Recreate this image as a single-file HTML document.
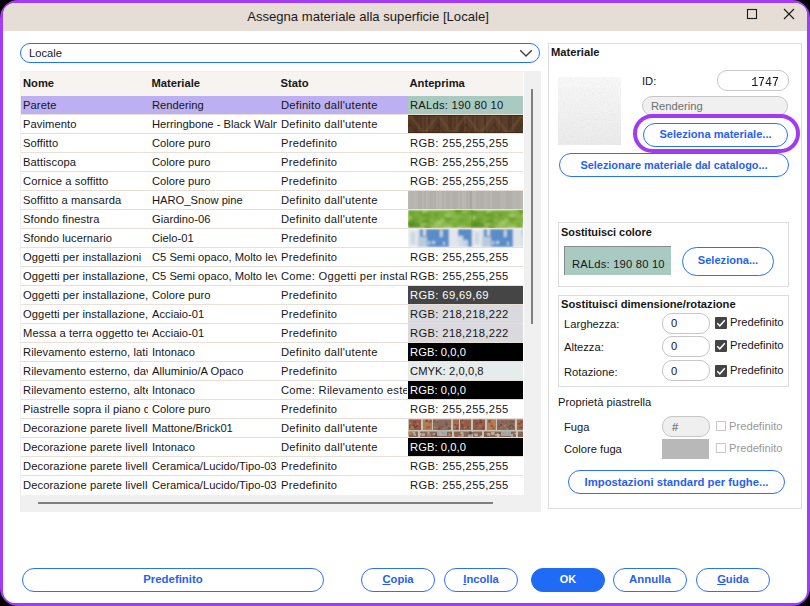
<!DOCTYPE html>
<html><head><meta charset="utf-8">
<style>
*{box-sizing:border-box;margin:0;padding:0}
html,body{width:810px;height:606px;background:#000;overflow:hidden;font-family:"Liberation Sans",sans-serif;color:#161616}
.win{position:absolute;left:0;top:0;width:810px;height:606px;background:#fff;clip-path:inset(3px round 12px)}
.frame{position:absolute;left:0;top:0;width:810px;height:606px;background:#A53CF5;border-radius:18px}
.tb{position:absolute;left:0;top:0;width:810px;height:31px;background:#E6DDD7}
.title{position:absolute;left:0;top:3px;width:736px;height:28px;line-height:28px;text-align:center;font-size:13.1px;color:#1a1a1a}
.t{position:absolute;white-space:nowrap;font-size:11.2px;line-height:13px}
.b{font-weight:bold}
.combo{position:absolute;left:20px;top:43px;width:520px;height:20px;border:1.3px solid #2070FA;border-radius:10px;background:#fff}
.table{position:absolute;left:20px;top:71px;width:521px;height:441px;background:#F0F0F0}
.hdr{position:absolute;left:0;top:1px;width:503px;height:24px;background:#F7F3F0}
.hdr span{position:absolute;top:0;line-height:23px;font-size:11.2px;font-weight:bold;white-space:nowrap}
.row{position:absolute;left:1px;width:502px;height:19px;background:#fff;border-bottom:1px solid #EADFD7;overflow:hidden}
.row .c{position:absolute;top:0;height:18px;line-height:18px;font-size:11.2px;white-space:nowrap;overflow:hidden}
.c1{left:2px;width:125px;letter-spacing:0.08px}
.c2{left:131px;width:125px}
.c3{left:260px;width:126px;letter-spacing:0.25px}
.pv{position:absolute;left:387px;top:0;width:115px;height:18px}
.pvt{position:absolute;left:2px;top:0;line-height:18px;font-size:11.2px;white-space:nowrap;letter-spacing:0.37px}
.sel{background:#BDB0F2}
.grp{position:absolute;border:1px solid #DCDCDC}
.btn{position:absolute;border:1px solid #2A70F8;border-radius:13px;color:#1F62F2;font-weight:bold;text-align:center;font-size:10.9px;background:#fff;white-space:nowrap}
.inp{position:absolute;border:1px solid #C6C6C6;border-radius:10px;background:#fff}
.chk{position:absolute;width:12px;height:12px;background:#444;border-radius:1px}
.chke{position:absolute;width:10px;height:10px;border:1px solid #C8C8C8;background:#fff}


.last{border-bottom:none;border-bottom-right-radius:2px}

</style></head><body>
<div class="frame"></div>
<div class="win">
  <div class="tb"></div>
  <div class="title">Assegna materiale alla superficie [Locale]</div>
  <svg class="abs" style="position:absolute;left:746px;top:8px" width="12" height="12"><rect x="1.5" y="1.5" width="9" height="9" fill="none" stroke="#1a1a1a" stroke-width="1.1"/></svg>
  <svg style="position:absolute;left:783px;top:8px" width="12" height="12"><path d="M1 1L11 11M11 1L1 11" stroke="#1a1a1a" stroke-width="1.1"/></svg>

  <div class="combo"></div>
  <span class="t" style="left:29px;top:47px">Locale</span>
  <svg style="position:absolute;left:519px;top:47px" width="16" height="12"><path d="M1.2 3.2L7 9L12.8 3.2" fill="none" stroke="#404040" stroke-width="1.4"/></svg>

  <div class="table">
    <div class="hdr"><span style="left:3px">Nome</span><span style="left:131.5px">Materiale</span><span style="left:260.5px">Stato</span><span style="left:389.5px">Anteprima</span></div>
<div class="row sel" style="top:25px"><span class="c c1">Parete</span><span class="c c2">Rendering</span><span class="c c3">Definito dall'utente</span><div class="pv" style="background:#A9CAC1"><span class="pvt" style="color:#161616;letter-spacing:0.24px">RALds: 190 80 10</span></div></div>
<div class="row" style="top:44px"><span class="c c1">Pavimento</span><span class="c c2">Herringbone - Black Walnut</span><span class="c c3">Definito dall'utente</span><div class="pv"><svg width="115" height="18" style="position:absolute;left:0;top:0;display:block"><defs><filter id="hb" x="0" y="0" width="1" height="1"><feGaussianBlur stdDeviation="0.6"/></filter></defs><g filter="url(#hb)"><rect width="115" height="18" fill="#553A26"/><rect x="0" y="0" width="2" height="18" fill="#52382A" opacity="0.6"/><rect x="2" y="0" width="2" height="18" fill="#52382A" opacity="0.6"/><rect x="4" y="0" width="2" height="18" fill="#52382A" opacity="0.6"/><rect x="6" y="0" width="2" height="18" fill="#4A301F" opacity="0.6"/><rect x="8" y="0" width="2" height="18" fill="#4A301F" opacity="0.6"/><rect x="10" y="0" width="2" height="18" fill="#52382A" opacity="0.6"/><rect x="12" y="0" width="2" height="18" fill="#4A301F" opacity="0.6"/><rect x="14" y="0" width="2" height="18" fill="#5E412B" opacity="0.6"/><rect x="16" y="0" width="2" height="18" fill="#52382A" opacity="0.6"/><rect x="18" y="0" width="2" height="18" fill="#654630" opacity="0.6"/><rect x="20" y="0" width="2" height="18" fill="#4A301F" opacity="0.6"/><rect x="22" y="0" width="2" height="18" fill="#5E412B" opacity="0.6"/><rect x="24" y="0" width="2" height="18" fill="#5E412B" opacity="0.6"/><rect x="26" y="0" width="2" height="18" fill="#52382A" opacity="0.6"/><rect x="28" y="0" width="2" height="18" fill="#52382A" opacity="0.6"/><rect x="30" y="0" width="2" height="18" fill="#4A301F" opacity="0.6"/><rect x="32" y="0" width="2" height="18" fill="#5E412B" opacity="0.6"/><rect x="34" y="0" width="2" height="18" fill="#5E412B" opacity="0.6"/><rect x="36" y="0" width="2" height="18" fill="#5E412B" opacity="0.6"/><rect x="38" y="0" width="2" height="18" fill="#5E412B" opacity="0.6"/><rect x="40" y="0" width="2" height="18" fill="#4A301F" opacity="0.6"/><rect x="42" y="0" width="2" height="18" fill="#4A301F" opacity="0.6"/><rect x="44" y="0" width="2" height="18" fill="#5E412B" opacity="0.6"/><rect x="46" y="0" width="2" height="18" fill="#52382A" opacity="0.6"/><rect x="48" y="0" width="2" height="18" fill="#654630" opacity="0.6"/><rect x="50" y="0" width="2" height="18" fill="#52382A" opacity="0.6"/><rect x="52" y="0" width="2" height="18" fill="#4A301F" opacity="0.6"/><rect x="54" y="0" width="2" height="18" fill="#4A301F" opacity="0.6"/><rect x="56" y="0" width="2" height="18" fill="#654630" opacity="0.6"/><rect x="58" y="0" width="2" height="18" fill="#52382A" opacity="0.6"/><rect x="60" y="0" width="2" height="18" fill="#5E412B" opacity="0.6"/><rect x="62" y="0" width="2" height="18" fill="#5E412B" opacity="0.6"/><rect x="64" y="0" width="2" height="18" fill="#52382A" opacity="0.6"/><rect x="66" y="0" width="2" height="18" fill="#654630" opacity="0.6"/><rect x="68" y="0" width="2" height="18" fill="#52382A" opacity="0.6"/><rect x="70" y="0" width="2" height="18" fill="#5E412B" opacity="0.6"/><rect x="72" y="0" width="2" height="18" fill="#654630" opacity="0.6"/><rect x="74" y="0" width="2" height="18" fill="#654630" opacity="0.6"/><rect x="76" y="0" width="2" height="18" fill="#4A301F" opacity="0.6"/><rect x="78" y="0" width="2" height="18" fill="#654630" opacity="0.6"/><rect x="80" y="0" width="2" height="18" fill="#5E412B" opacity="0.6"/><rect x="82" y="0" width="2" height="18" fill="#5E412B" opacity="0.6"/><rect x="84" y="0" width="2" height="18" fill="#5E412B" opacity="0.6"/><rect x="86" y="0" width="2" height="18" fill="#52382A" opacity="0.6"/><rect x="88" y="0" width="2" height="18" fill="#5E412B" opacity="0.6"/><rect x="90" y="0" width="2" height="18" fill="#654630" opacity="0.6"/><rect x="92" y="0" width="2" height="18" fill="#52382A" opacity="0.6"/><rect x="94" y="0" width="2" height="18" fill="#5E412B" opacity="0.6"/><rect x="96" y="0" width="2" height="18" fill="#5E412B" opacity="0.6"/><rect x="98" y="0" width="2" height="18" fill="#5E412B" opacity="0.6"/><rect x="100" y="0" width="2" height="18" fill="#4A301F" opacity="0.6"/><rect x="102" y="0" width="2" height="18" fill="#4A301F" opacity="0.6"/><rect x="104" y="0" width="2" height="18" fill="#5E412B" opacity="0.6"/><rect x="106" y="0" width="2" height="18" fill="#52382A" opacity="0.6"/><rect x="108" y="0" width="2" height="18" fill="#52382A" opacity="0.6"/><rect x="110" y="0" width="2" height="18" fill="#52382A" opacity="0.6"/><rect x="112" y="0" width="2" height="18" fill="#52382A" opacity="0.6"/><rect x="114" y="0" width="2" height="18" fill="#5E412B" opacity="0.6"/><path d="M-12 19L2 0L16 19" fill="none" stroke="#76553A" stroke-width="3" opacity="0.4"/><path d="M-5 19L2 9L9 19" fill="none" stroke="#3C2517" stroke-width="1.5" opacity="0.35"/><path d="M16 19L30 0L44 19" fill="none" stroke="#76553A" stroke-width="3" opacity="0.4"/><path d="M23 19L30 9L37 19" fill="none" stroke="#3C2517" stroke-width="1.5" opacity="0.35"/><path d="M44 19L58 0L72 19" fill="none" stroke="#76553A" stroke-width="3" opacity="0.4"/><path d="M51 19L58 9L65 19" fill="none" stroke="#3C2517" stroke-width="1.5" opacity="0.35"/><path d="M72 19L86 0L100 19" fill="none" stroke="#76553A" stroke-width="3" opacity="0.4"/><path d="M79 19L86 9L93 19" fill="none" stroke="#3C2517" stroke-width="1.5" opacity="0.35"/><path d="M100 19L114 0L128 19" fill="none" stroke="#76553A" stroke-width="3" opacity="0.4"/><path d="M107 19L114 9L121 19" fill="none" stroke="#3C2517" stroke-width="1.5" opacity="0.35"/></g><rect width="115" height="1" fill="#3a2414" opacity="0.7"/><rect y="17" width="115" height="1" fill="#3a2414" opacity="0.7"/></svg></div></div>
<div class="row" style="top:63px"><span class="c c1">Soffitto</span><span class="c c2">Colore puro</span><span class="c c3">Predefinito</span><div class="pv" style="background:#fff"><span class="pvt" style="color:#161616;letter-spacing:0.37px">RGB: 255,255,255</span></div></div>
<div class="row" style="top:82px"><span class="c c1">Battiscopa</span><span class="c c2">Colore puro</span><span class="c c3">Predefinito</span><div class="pv" style="background:#fff"><span class="pvt" style="color:#161616;letter-spacing:0.37px">RGB: 255,255,255</span></div></div>
<div class="row" style="top:101px"><span class="c c1">Cornice a soffitto</span><span class="c c2">Colore puro</span><span class="c c3">Predefinito</span><div class="pv" style="background:#fff"><span class="pvt" style="color:#161616;letter-spacing:0.37px">RGB: 255,255,255</span></div></div>
<div class="row" style="top:120px"><span class="c c1">Soffitto a mansarda</span><span class="c c2">HARO_Snow pine</span><span class="c c3">Definito dall'utente</span><div class="pv"><svg width="115" height="18" style="position:absolute;left:0;top:0;display:block"><defs><filter id="wb" x="0" y="0" width="1" height="1"><feGaussianBlur stdDeviation="0.5"/></filter></defs><g filter="url(#wb)"><rect width="115" height="18" fill="#B6B3AD"/><rect x="0" y="0" width="2" height="18" fill="#BCB9B3" opacity="0.7"/><rect x="2" y="0" width="2" height="18" fill="#B8B5AF" opacity="0.7"/><rect x="4" y="0" width="2" height="18" fill="#B8B5AF" opacity="0.7"/><rect x="6" y="0" width="2" height="18" fill="#BCB9B3" opacity="0.7"/><rect x="8" y="0" width="2" height="18" fill="#BAB7B1" opacity="0.7"/><rect x="10" y="0" width="2" height="18" fill="#B0ADA7" opacity="0.7"/><rect x="12" y="0" width="2" height="18" fill="#B2AFA9" opacity="0.7"/><rect x="14" y="0" width="2" height="18" fill="#BAB7B1" opacity="0.7"/><rect x="16" y="0" width="2" height="18" fill="#B2AFA9" opacity="0.7"/><rect x="18" y="0" width="2" height="18" fill="#BAB7B1" opacity="0.7"/><rect x="20" y="0" width="2" height="18" fill="#B8B5AF" opacity="0.7"/><rect x="22" y="0" width="2" height="18" fill="#B0ADA7" opacity="0.7"/><rect x="24" y="0" width="2" height="18" fill="#B2AFA9" opacity="0.7"/><rect x="26" y="0" width="2" height="18" fill="#B0ADA7" opacity="0.7"/><rect x="28" y="0" width="2" height="18" fill="#BCB9B3" opacity="0.7"/><rect x="30" y="0" width="2" height="18" fill="#BAB7B1" opacity="0.7"/><rect x="32" y="0" width="2" height="18" fill="#BCB9B3" opacity="0.7"/><rect x="34" y="0" width="2" height="18" fill="#B2AFA9" opacity="0.7"/><rect x="36" y="0" width="2" height="18" fill="#BAB7B1" opacity="0.7"/><rect x="38" y="0" width="2" height="18" fill="#B2AFA9" opacity="0.7"/><rect x="40" y="0" width="2" height="18" fill="#B0ADA7" opacity="0.7"/><rect x="42" y="0" width="2" height="18" fill="#B8B5AF" opacity="0.7"/><rect x="44" y="0" width="2" height="18" fill="#B2AFA9" opacity="0.7"/><rect x="46" y="0" width="2" height="18" fill="#B0ADA7" opacity="0.7"/><rect x="48" y="0" width="2" height="18" fill="#B2AFA9" opacity="0.7"/><rect x="50" y="0" width="2" height="18" fill="#BAB7B1" opacity="0.7"/><rect x="52" y="0" width="2" height="18" fill="#B2AFA9" opacity="0.7"/><rect x="54" y="0" width="2" height="18" fill="#BCB9B3" opacity="0.7"/><rect x="56" y="0" width="2" height="18" fill="#BCB9B3" opacity="0.7"/><rect x="58" y="0" width="2" height="18" fill="#B0ADA7" opacity="0.7"/><rect x="60" y="0" width="2" height="18" fill="#B2AFA9" opacity="0.7"/><rect x="62" y="0" width="2" height="18" fill="#B2AFA9" opacity="0.7"/><rect x="62" y="0" width="2" height="18" fill="#A3A09A" opacity="0.6"/><rect x="64" y="0" width="2" height="18" fill="#BAB7B1" opacity="0.7"/><rect x="66" y="0" width="2" height="18" fill="#BAB7B1" opacity="0.7"/><rect x="68" y="0" width="2" height="18" fill="#B2AFA9" opacity="0.7"/><rect x="70" y="0" width="2" height="18" fill="#B2AFA9" opacity="0.7"/><rect x="72" y="0" width="2" height="18" fill="#B2AFA9" opacity="0.7"/><rect x="74" y="0" width="2" height="18" fill="#B2AFA9" opacity="0.7"/><rect x="76" y="0" width="2" height="18" fill="#B8B5AF" opacity="0.7"/><rect x="78" y="0" width="2" height="18" fill="#B8B5AF" opacity="0.7"/><rect x="80" y="0" width="2" height="18" fill="#B2AFA9" opacity="0.7"/><rect x="82" y="0" width="2" height="18" fill="#BCB9B3" opacity="0.7"/><rect x="84" y="0" width="2" height="18" fill="#B2AFA9" opacity="0.7"/><rect x="86" y="0" width="2" height="18" fill="#B2AFA9" opacity="0.7"/><rect x="88" y="0" width="2" height="18" fill="#B2AFA9" opacity="0.7"/><rect x="90" y="0" width="2" height="18" fill="#B0ADA7" opacity="0.7"/><rect x="92" y="0" width="2" height="18" fill="#B8B5AF" opacity="0.7"/><rect x="94" y="0" width="2" height="18" fill="#BAB7B1" opacity="0.7"/><rect x="96" y="0" width="2" height="18" fill="#B8B5AF" opacity="0.7"/><rect x="98" y="0" width="2" height="18" fill="#B0ADA7" opacity="0.7"/><rect x="100" y="0" width="2" height="18" fill="#B2AFA9" opacity="0.7"/><rect x="102" y="0" width="2" height="18" fill="#B2AFA9" opacity="0.7"/><rect x="104" y="0" width="2" height="18" fill="#B8B5AF" opacity="0.7"/><rect x="106" y="0" width="2" height="18" fill="#BAB7B1" opacity="0.7"/><rect x="108" y="0" width="2" height="18" fill="#B8B5AF" opacity="0.7"/><rect x="110" y="0" width="2" height="18" fill="#B8B5AF" opacity="0.7"/><rect x="112" y="0" width="2" height="18" fill="#BCB9B3" opacity="0.7"/><rect x="114" y="0" width="2" height="18" fill="#BCB9B3" opacity="0.7"/><rect x="116" y="0" width="2" height="18" fill="#BAB7B1" opacity="0.7"/><rect x="118" y="0" width="2" height="18" fill="#BCB9B3" opacity="0.7"/><rect x="120" y="0" width="2" height="18" fill="#B8B5AF" opacity="0.7"/><rect x="122" y="0" width="2" height="18" fill="#BAB7B1" opacity="0.7"/><rect x="124" y="0" width="2" height="18" fill="#B8B5AF" opacity="0.7"/><rect x="126" y="0" width="2" height="18" fill="#B8B5AF" opacity="0.7"/><rect x="126" y="0" width="2" height="18" fill="#A3A09A" opacity="0.6"/></g></svg></div></div>
<div class="row" style="top:139px"><span class="c c1">Sfondo finestra</span><span class="c c2">Giardino-06</span><span class="c c3">Definito dall'utente</span><div class="pv"><svg width="115" height="18" style="position:absolute;left:0;top:0;display:block"><defs><filter id="gb" x="0" y="0" width="1" height="1"><feGaussianBlur stdDeviation="1"/></filter></defs><g filter="url(#gb)"><rect width="115" height="18" fill="#7AAD3B"/><ellipse cx="15.2" cy="9.8" rx="2.8" ry="1.9" fill="#8DBB4C" opacity="0.7"/><ellipse cx="30.3" cy="10.5" rx="3.4" ry="2.3" fill="#6CA232" opacity="0.7"/><ellipse cx="16.6" cy="4.2" rx="4.5" ry="3.0" fill="#6CA232" opacity="0.7"/><ellipse cx="34.6" cy="9.9" rx="2.9" ry="1.9" fill="#A3C867" opacity="0.7"/><ellipse cx="14.8" cy="2.7" rx="4.3" ry="2.9" fill="#6CA232" opacity="0.7"/><ellipse cx="47.4" cy="12.1" rx="2.0" ry="1.3" fill="#8DBB4C" opacity="0.7"/><ellipse cx="2.7" cy="14.0" rx="4.0" ry="2.7" fill="#5F9628" opacity="0.7"/><ellipse cx="30.3" cy="12.9" rx="4.2" ry="2.8" fill="#B0CF75" opacity="0.7"/><ellipse cx="50.4" cy="7.7" rx="3.8" ry="2.5" fill="#8DBB4C" opacity="0.7"/><ellipse cx="28.5" cy="16.8" rx="4.2" ry="2.8" fill="#9CC65C" opacity="0.7"/><ellipse cx="2.3" cy="8.9" rx="2.5" ry="1.7" fill="#B0CF75" opacity="0.7"/><ellipse cx="27.9" cy="11.3" rx="2.6" ry="1.7" fill="#8DBB4C" opacity="0.7"/><ellipse cx="53.3" cy="10.3" rx="3.2" ry="2.2" fill="#6CA232" opacity="0.7"/><ellipse cx="37.4" cy="16.3" rx="3.6" ry="2.4" fill="#9CC65C" opacity="0.7"/><ellipse cx="54.8" cy="17.8" rx="3.6" ry="2.4" fill="#A3C867" opacity="0.7"/><ellipse cx="44.7" cy="5.9" rx="3.3" ry="2.2" fill="#8DBB4C" opacity="0.7"/><ellipse cx="36.4" cy="12.8" rx="2.4" ry="1.6" fill="#8DBB4C" opacity="0.7"/><ellipse cx="17.1" cy="2.2" rx="3.1" ry="2.1" fill="#B0CF75" opacity="0.7"/><ellipse cx="63.3" cy="1.6" rx="4.0" ry="2.6" fill="#6CA232" opacity="0.7"/><ellipse cx="57.4" cy="0.4" rx="3.0" ry="2.0" fill="#6CA232" opacity="0.7"/><ellipse cx="55.9" cy="0.8" rx="3.5" ry="2.3" fill="#9CC65C" opacity="0.7"/><ellipse cx="24.2" cy="10.6" rx="3.3" ry="2.2" fill="#5F9628" opacity="0.7"/><ellipse cx="32.3" cy="18.0" rx="2.6" ry="1.8" fill="#9CC65C" opacity="0.7"/><ellipse cx="6.9" cy="9.6" rx="4.4" ry="2.9" fill="#6CA232" opacity="0.7"/><ellipse cx="18.7" cy="4.7" rx="3.7" ry="2.4" fill="#5F9628" opacity="0.7"/><ellipse cx="20.1" cy="17.3" rx="4.2" ry="2.8" fill="#6CA232" opacity="0.7"/><ellipse cx="24.1" cy="15.7" rx="2.8" ry="1.9" fill="#8DBB4C" opacity="0.7"/><ellipse cx="43.6" cy="1.8" rx="4.4" ry="3.0" fill="#8DBB4C" opacity="0.7"/><ellipse cx="17.4" cy="11.4" rx="3.7" ry="2.5" fill="#5F9628" opacity="0.7"/><ellipse cx="28.0" cy="4.6" rx="2.6" ry="1.7" fill="#5F9628" opacity="0.7"/><ellipse cx="0.7" cy="7.5" rx="3.4" ry="2.2" fill="#9CC65C" opacity="0.7"/><ellipse cx="24.1" cy="10.6" rx="2.2" ry="1.4" fill="#B0CF75" opacity="0.7"/><ellipse cx="40.1" cy="8.4" rx="3.6" ry="2.4" fill="#5F9628" opacity="0.7"/><ellipse cx="39.0" cy="5.0" rx="3.1" ry="2.1" fill="#8DBB4C" opacity="0.7"/><ellipse cx="3.9" cy="12.2" rx="4.4" ry="2.9" fill="#5F9628" opacity="0.7"/><ellipse cx="40.2" cy="5.4" rx="3.4" ry="2.3" fill="#A3C867" opacity="0.7"/><ellipse cx="23.3" cy="5.6" rx="2.8" ry="1.9" fill="#8DBB4C" opacity="0.7"/><ellipse cx="16.9" cy="14.2" rx="2.1" ry="1.4" fill="#9CC65C" opacity="0.7"/><ellipse cx="62.2" cy="12.3" rx="2.2" ry="1.4" fill="#8DBB4C" opacity="0.7"/><ellipse cx="14.2" cy="14.5" rx="2.4" ry="1.6" fill="#A3C867" opacity="0.7"/><ellipse cx="43.4" cy="11.7" rx="2.1" ry="1.4" fill="#8DBB4C" opacity="0.7"/><ellipse cx="20.6" cy="6.0" rx="4.1" ry="2.7" fill="#6CA232" opacity="0.7"/><ellipse cx="51.8" cy="17.3" rx="2.0" ry="1.3" fill="#B0CF75" opacity="0.7"/><ellipse cx="41.6" cy="15.9" rx="3.0" ry="2.0" fill="#A3C867" opacity="0.7"/><ellipse cx="50.4" cy="0.6" rx="4.4" ry="2.9" fill="#5F9628" opacity="0.7"/><rect x="0" y="13" width="12" height="5" fill="#4C881D" opacity="0.55"/><rect x="0" y="0" width="6" height="6" fill="#5C9628" opacity="0.4"/><ellipse cx="79.2" cy="9.8" rx="2.8" ry="1.9" fill="#8DBB4C" opacity="0.7"/><ellipse cx="94.3" cy="10.5" rx="3.4" ry="2.3" fill="#6CA232" opacity="0.7"/><ellipse cx="80.6" cy="4.2" rx="4.5" ry="3.0" fill="#6CA232" opacity="0.7"/><ellipse cx="98.6" cy="9.9" rx="2.9" ry="1.9" fill="#A3C867" opacity="0.7"/><ellipse cx="78.8" cy="2.7" rx="4.3" ry="2.9" fill="#6CA232" opacity="0.7"/><ellipse cx="111.4" cy="12.1" rx="2.0" ry="1.3" fill="#8DBB4C" opacity="0.7"/><ellipse cx="66.7" cy="14.0" rx="4.0" ry="2.7" fill="#5F9628" opacity="0.7"/><ellipse cx="94.3" cy="12.9" rx="4.2" ry="2.8" fill="#B0CF75" opacity="0.7"/><ellipse cx="114.4" cy="7.7" rx="3.8" ry="2.5" fill="#8DBB4C" opacity="0.7"/><ellipse cx="92.5" cy="16.8" rx="4.2" ry="2.8" fill="#9CC65C" opacity="0.7"/><ellipse cx="66.3" cy="8.9" rx="2.5" ry="1.7" fill="#B0CF75" opacity="0.7"/><ellipse cx="91.9" cy="11.3" rx="2.6" ry="1.7" fill="#8DBB4C" opacity="0.7"/><ellipse cx="117.3" cy="10.3" rx="3.2" ry="2.2" fill="#6CA232" opacity="0.7"/><ellipse cx="101.4" cy="16.3" rx="3.6" ry="2.4" fill="#9CC65C" opacity="0.7"/><ellipse cx="118.8" cy="17.8" rx="3.6" ry="2.4" fill="#A3C867" opacity="0.7"/><ellipse cx="108.7" cy="5.9" rx="3.3" ry="2.2" fill="#8DBB4C" opacity="0.7"/><ellipse cx="100.4" cy="12.8" rx="2.4" ry="1.6" fill="#8DBB4C" opacity="0.7"/><ellipse cx="81.1" cy="2.2" rx="3.1" ry="2.1" fill="#B0CF75" opacity="0.7"/><ellipse cx="127.3" cy="1.6" rx="4.0" ry="2.6" fill="#6CA232" opacity="0.7"/><ellipse cx="121.4" cy="0.4" rx="3.0" ry="2.0" fill="#6CA232" opacity="0.7"/><ellipse cx="119.9" cy="0.8" rx="3.5" ry="2.3" fill="#9CC65C" opacity="0.7"/><ellipse cx="88.2" cy="10.6" rx="3.3" ry="2.2" fill="#5F9628" opacity="0.7"/><ellipse cx="96.3" cy="18.0" rx="2.6" ry="1.8" fill="#9CC65C" opacity="0.7"/><ellipse cx="70.9" cy="9.6" rx="4.4" ry="2.9" fill="#6CA232" opacity="0.7"/><ellipse cx="82.7" cy="4.7" rx="3.7" ry="2.4" fill="#5F9628" opacity="0.7"/><ellipse cx="84.1" cy="17.3" rx="4.2" ry="2.8" fill="#6CA232" opacity="0.7"/><ellipse cx="88.1" cy="15.7" rx="2.8" ry="1.9" fill="#8DBB4C" opacity="0.7"/><ellipse cx="107.6" cy="1.8" rx="4.4" ry="3.0" fill="#8DBB4C" opacity="0.7"/><ellipse cx="81.4" cy="11.4" rx="3.7" ry="2.5" fill="#5F9628" opacity="0.7"/><ellipse cx="92.0" cy="4.6" rx="2.6" ry="1.7" fill="#5F9628" opacity="0.7"/><ellipse cx="64.7" cy="7.5" rx="3.4" ry="2.2" fill="#9CC65C" opacity="0.7"/><ellipse cx="88.1" cy="10.6" rx="2.2" ry="1.4" fill="#B0CF75" opacity="0.7"/><ellipse cx="104.1" cy="8.4" rx="3.6" ry="2.4" fill="#5F9628" opacity="0.7"/><ellipse cx="103.0" cy="5.0" rx="3.1" ry="2.1" fill="#8DBB4C" opacity="0.7"/><ellipse cx="67.9" cy="12.2" rx="4.4" ry="2.9" fill="#5F9628" opacity="0.7"/><ellipse cx="104.2" cy="5.4" rx="3.4" ry="2.3" fill="#A3C867" opacity="0.7"/><ellipse cx="87.3" cy="5.6" rx="2.8" ry="1.9" fill="#8DBB4C" opacity="0.7"/><ellipse cx="80.9" cy="14.2" rx="2.1" ry="1.4" fill="#9CC65C" opacity="0.7"/><ellipse cx="126.2" cy="12.3" rx="2.2" ry="1.4" fill="#8DBB4C" opacity="0.7"/><ellipse cx="78.2" cy="14.5" rx="2.4" ry="1.6" fill="#A3C867" opacity="0.7"/><ellipse cx="107.4" cy="11.7" rx="2.1" ry="1.4" fill="#8DBB4C" opacity="0.7"/><ellipse cx="84.6" cy="6.0" rx="4.1" ry="2.7" fill="#6CA232" opacity="0.7"/><ellipse cx="115.8" cy="17.3" rx="2.0" ry="1.3" fill="#B0CF75" opacity="0.7"/><ellipse cx="105.6" cy="15.9" rx="3.0" ry="2.0" fill="#A3C867" opacity="0.7"/><ellipse cx="114.4" cy="0.6" rx="4.4" ry="2.9" fill="#5F9628" opacity="0.7"/><rect x="64" y="13" width="12" height="5" fill="#4C881D" opacity="0.55"/><rect x="64" y="0" width="6" height="6" fill="#5C9628" opacity="0.4"/></g><rect x="63" y="0" width="2" height="18" fill="#5C9628" opacity="0.35"/></svg></div></div>
<div class="row" style="top:158px"><span class="c c1">Sfondo lucernario</span><span class="c c2">Cielo-01</span><span class="c c3">Predefinito</span><div class="pv"><svg width="115" height="18" style="position:absolute;left:0;top:0;display:block"><defs><filter id="sb" x="0" y="0" width="1" height="1"><feGaussianBlur stdDeviation="0.8"/></filter></defs><g filter="url(#sb)"><rect width="115" height="18" fill="#5A8DC8"/><rect x="0" y="0" width="10" height="18" fill="#E3E8EE"/><rect x="3" y="3" width="4" height="12" fill="#CDD6DF"/><rect x="10" y="8" width="9" height="10" fill="#BACBDD"/><rect x="10" y="0" width="2" height="8" fill="#C8D4E2"/><rect x="15" y="0" width="3" height="7" fill="#D0DBE7"/><rect x="32" y="1" width="2.5" height="7" fill="#D3DDE9"/><rect x="20" y="12" width="2" height="4" fill="#C5D3E2"/><rect x="24" y="12" width="3" height="3" fill="#C5D3E2"/><rect x="35" y="13" width="2" height="3" fill="#C0CFE0"/><rect x="41" y="0" width="9" height="18" fill="#E0E6EC"/><rect x="50" y="7" width="5" height="11" fill="#D2DCE7"/><rect x="55" y="11" width="5" height="7" fill="#C6D3E2"/><rect x="64" y="0" width="10" height="18" fill="#E3E8EE"/><rect x="67" y="3" width="4" height="12" fill="#CDD6DF"/><rect x="74" y="8" width="9" height="10" fill="#BACBDD"/><rect x="74" y="0" width="2" height="8" fill="#C8D4E2"/><rect x="79" y="0" width="3" height="7" fill="#D0DBE7"/><rect x="96" y="1" width="2.5" height="7" fill="#D3DDE9"/><rect x="84" y="12" width="2" height="4" fill="#C5D3E2"/><rect x="88" y="12" width="3" height="3" fill="#C5D3E2"/><rect x="99" y="13" width="2" height="3" fill="#C0CFE0"/><rect x="105" y="0" width="9" height="18" fill="#E0E6EC"/><rect x="114" y="7" width="5" height="11" fill="#D2DCE7"/><rect x="119" y="11" width="5" height="7" fill="#C6D3E2"/></g></svg></div></div>
<div class="row" style="top:177px"><span class="c c1">Oggetti per installazioni</span><span class="c c2">C5 Semi opaco, Molto levigato</span><span class="c c3">Predefinito</span><div class="pv" style="background:#fff"><span class="pvt" style="color:#161616;letter-spacing:0.37px">RGB: 255,255,255</span></div></div>
<div class="row" style="top:196px"><span class="c c1">Oggetti per installazione, elettrico</span><span class="c c2">C5 Semi opaco, Molto levigato</span><span class="c c3">Come: Oggetti per installazioni</span><div class="pv" style="background:#fff"><span class="pvt" style="color:#161616;letter-spacing:0.37px">RGB: 255,255,255</span></div></div>
<div class="row" style="top:215px"><span class="c c1">Oggetti per installazione, bagno</span><span class="c c2">Colore puro</span><span class="c c3">Predefinito</span><div class="pv" style="background:#454545"><span class="pvt" style="color:#fff;letter-spacing:0.37px">RGB: 69,69,69</span></div></div>
<div class="row" style="top:234px"><span class="c c1">Oggetti per installazione, cucina</span><span class="c c2">Acciaio-01</span><span class="c c3">Predefinito</span><div class="pv" style="background:#DADADE"><span class="pvt" style="color:#161616;letter-spacing:0.37px">RGB: 218,218,222</span></div></div>
<div class="row" style="top:253px"><span class="c c1">Messa a terra oggetto tecnico</span><span class="c c2">Acciaio-01</span><span class="c c3">Predefinito</span><div class="pv" style="background:#DADADE"><span class="pvt" style="color:#161616;letter-spacing:0.37px">RGB: 218,218,222</span></div></div>
<div class="row" style="top:272px"><span class="c c1">Rilevamento esterno, lati</span><span class="c c2">Intonaco</span><span class="c c3">Definito dall'utente</span><div class="pv" style="background:#000"><span class="pvt" style="color:#fff;letter-spacing:0.07px">RGB: 0,0,0</span></div></div>
<div class="row" style="top:291px"><span class="c c1">Rilevamento esterno, davanzale</span><span class="c c2">Alluminio/A Opaco</span><span class="c c3">Predefinito</span><div class="pv" style="background:#E6EBEB"><span class="pvt" style="color:#161616;letter-spacing:0.07px">CMYK: 2,0,0,8</span></div></div>
<div class="row" style="top:310px"><span class="c c1">Rilevamento esterno, altezza</span><span class="c c2">Intonaco</span><span class="c c3">Come: Rilevamento esterno, lati</span><div class="pv" style="background:#000"><span class="pvt" style="color:#fff;letter-spacing:0.07px">RGB: 0,0,0</span></div></div>
<div class="row" style="top:329px"><span class="c c1">Piastrelle sopra il piano di lavoro</span><span class="c c2">Colore puro</span><span class="c c3">Predefinito</span><div class="pv" style="background:#fff"><span class="pvt" style="color:#161616;letter-spacing:0.37px">RGB: 255,255,255</span></div></div>
<div class="row" style="top:348px"><span class="c c1">Decorazione parete livello 1</span><span class="c c2">Mattone/Brick01</span><span class="c c3">Definito dall'utente</span><div class="pv"><svg width="115" height="18" style="position:absolute;left:0;top:0;display:block"><defs><filter id="bb" x="0" y="0" width="1" height="1"><feGaussianBlur stdDeviation="0.5"/></filter></defs><g filter="url(#bb)"><rect width="115" height="18" fill="#C9C4B6"/><rect x="1" y="0.5" width="12" height="10.5" fill="#955A48"/><rect x="2.6" y="6.4" width="2" height="2" fill="#93503C" opacity="0.8"/><rect x="3.8" y="7.7" width="2" height="2" fill="#B5805A" opacity="0.8"/><rect x="9.1" y="4.9" width="2" height="2" fill="#7A5A58" opacity="0.8"/><rect x="6.3" y="7.2" width="2" height="2" fill="#6B4236" opacity="0.8"/><rect x="4.7" y="5.5" width="2" height="2" fill="#6B4236" opacity="0.8"/><rect x="2.4" y="6.9" width="2" height="2" fill="#A86B4C" opacity="0.8"/><rect x="7.9" y="4.2" width="2" height="2" fill="#93503C" opacity="0.8"/><rect x="8.7" y="4.0" width="2" height="2" fill="#B5805A" opacity="0.8"/><rect x="1.3" y="3.3" width="2" height="2" fill="#B5805A" opacity="0.8"/><rect x="7.9" y="6.0" width="2" height="2" fill="#5E4A46" opacity="0.8"/><rect x="1.2" y="6.8" width="2" height="2" fill="#6B4236" opacity="0.8"/><rect x="2.2" y="8.4" width="2" height="2" fill="#B5805A" opacity="0.8"/><rect x="2.6" y="6.7" width="2" height="2" fill="#B5805A" opacity="0.8"/><rect x="5.8" y="2.1" width="2" height="2" fill="#6B4236" opacity="0.8"/><rect x="15" y="0.5" width="9" height="10.5" fill="#B57C52"/><rect x="18.3" y="7.5" width="2" height="2" fill="#6B4236" opacity="0.8"/><rect x="20.5" y="2.3" width="2" height="2" fill="#93503C" opacity="0.8"/><rect x="20.3" y="7.0" width="2" height="2" fill="#7A5A58" opacity="0.8"/><rect x="21.9" y="1.1" width="2" height="2" fill="#7A5A58" opacity="0.8"/><rect x="18.3" y="7.5" width="2" height="2" fill="#A86B4C" opacity="0.8"/><rect x="17.4" y="1.7" width="2" height="2" fill="#7A5A58" opacity="0.8"/><rect x="17.9" y="3.6" width="2" height="2" fill="#B5805A" opacity="0.8"/><rect x="18.5" y="3.2" width="2" height="2" fill="#B5805A" opacity="0.8"/><rect x="17.7" y="0.7" width="2" height="2" fill="#6B4236" opacity="0.8"/><rect x="16.1" y="6.6" width="2" height="2" fill="#B5805A" opacity="0.8"/><rect x="25" y="0.5" width="18" height="10.5" fill="#8A6A60"/><rect x="25.0" y="1.1" width="2" height="2" fill="#7A5A58" opacity="0.8"/><rect x="37.0" y="2.4" width="2" height="2" fill="#7A5A58" opacity="0.8"/><rect x="30.1" y="8.8" width="2" height="2" fill="#6B4236" opacity="0.8"/><rect x="27.9" y="1.9" width="2" height="2" fill="#5E4A46" opacity="0.8"/><rect x="38.3" y="3.3" width="2" height="2" fill="#7A5A58" opacity="0.8"/><rect x="39.9" y="2.6" width="2" height="2" fill="#A86B4C" opacity="0.8"/><rect x="26.1" y="7.4" width="2" height="2" fill="#B5805A" opacity="0.8"/><rect x="31.0" y="6.3" width="2" height="2" fill="#93503C" opacity="0.8"/><rect x="33.3" y="6.1" width="2" height="2" fill="#A86B4C" opacity="0.8"/><rect x="31.5" y="8.9" width="2" height="2" fill="#93503C" opacity="0.8"/><rect x="34.4" y="8.0" width="2" height="2" fill="#B5805A" opacity="0.8"/><rect x="33.1" y="6.2" width="2" height="2" fill="#A86B4C" opacity="0.8"/><rect x="27.6" y="1.1" width="2" height="2" fill="#B5805A" opacity="0.8"/><rect x="37.4" y="4.6" width="2" height="2" fill="#5E4A46" opacity="0.8"/><rect x="25.8" y="2.7" width="2" height="2" fill="#5E4A46" opacity="0.8"/><rect x="25.6" y="2.6" width="2" height="2" fill="#B5805A" opacity="0.8"/><rect x="26.1" y="3.4" width="2" height="2" fill="#A86B4C" opacity="0.8"/><rect x="40.7" y="6.8" width="2" height="2" fill="#B5805A" opacity="0.8"/><rect x="25.8" y="1.7" width="2" height="2" fill="#93503C" opacity="0.8"/><rect x="33.4" y="6.7" width="2" height="2" fill="#6B4236" opacity="0.8"/><rect x="40.2" y="8.1" width="2" height="2" fill="#5E4A46" opacity="0.8"/><rect x="45" y="0.5" width="6" height="10.5" fill="#A6684F"/><rect x="48.2" y="8.0" width="2" height="2" fill="#7A5A58" opacity="0.8"/><rect x="48.1" y="4.6" width="2" height="2" fill="#B5805A" opacity="0.8"/><rect x="46.2" y="5.0" width="2" height="2" fill="#5E4A46" opacity="0.8"/><rect x="45.6" y="6.6" width="2" height="2" fill="#B5805A" opacity="0.8"/><rect x="47.7" y="8.6" width="2" height="2" fill="#6B4236" opacity="0.8"/><rect x="46.1" y="3.3" width="2" height="2" fill="#A86B4C" opacity="0.8"/><rect x="48.4" y="5.5" width="2" height="2" fill="#5E4A46" opacity="0.8"/><rect x="52" y="0.5" width="11" height="10.5" fill="#935E4C"/><rect x="58.1" y="6.9" width="2" height="2" fill="#A86B4C" opacity="0.8"/><rect x="53.2" y="1.3" width="2" height="2" fill="#6B4236" opacity="0.8"/><rect x="53.7" y="6.0" width="2" height="2" fill="#A86B4C" opacity="0.8"/><rect x="52.6" y="1.5" width="2" height="2" fill="#5E4A46" opacity="0.8"/><rect x="53.1" y="5.1" width="2" height="2" fill="#5E4A46" opacity="0.8"/><rect x="55.6" y="8.0" width="2" height="2" fill="#7A5A58" opacity="0.8"/><rect x="53.5" y="2.1" width="2" height="2" fill="#B5805A" opacity="0.8"/><rect x="53.8" y="6.8" width="2" height="2" fill="#6B4236" opacity="0.8"/><rect x="57.4" y="4.8" width="2" height="2" fill="#93503C" opacity="0.8"/><rect x="59.0" y="7.2" width="2" height="2" fill="#6B4236" opacity="0.8"/><rect x="55.5" y="7.8" width="2" height="2" fill="#B5805A" opacity="0.8"/><rect x="58.9" y="2.0" width="2" height="2" fill="#93503C" opacity="0.8"/><rect x="54.1" y="8.7" width="2" height="2" fill="#7A5A58" opacity="0.8"/><rect x="1" y="12.5" width="62" height="5.5" fill="#8A6656"/><rect x="19.4" y="12.7" width="2.3" height="2.6" fill="#AAB6B2" opacity="0.85"/><rect x="61.4" y="15.8" width="3.0" height="2.4" fill="#B8886A" opacity="0.85"/><rect x="33.8" y="12.7" width="3.5" height="3.0" fill="#B8886A" opacity="0.85"/><rect x="19.2" y="15.3" width="3.5" height="1.8" fill="#B8886A" opacity="0.85"/><rect x="38.2" y="13.8" width="2.7" height="2.0" fill="#946450" opacity="0.85"/><rect x="61.6" y="12.9" width="3.3" height="2.4" fill="#7A5646" opacity="0.85"/><rect x="50.1" y="16.4" width="3.2" height="1.5" fill="#B8886A" opacity="0.85"/><rect x="40.0" y="14.3" width="3.0" height="2.8" fill="#B8886A" opacity="0.85"/><rect x="4.4" y="12.6" width="2.9" height="1.9" fill="#C4BEB0" opacity="0.85"/><rect x="43.7" y="15.8" width="2.9" height="2.7" fill="#C4BEB0" opacity="0.85"/><rect x="24.7" y="13.8" width="3.3" height="2.9" fill="#946450" opacity="0.85"/><rect x="5.3" y="14.4" width="2.7" height="2.4" fill="#AAB6B2" opacity="0.85"/><rect x="13.4" y="14.3" width="3.5" height="2.5" fill="#C4BEB0" opacity="0.85"/><rect x="53.3" y="15.3" width="2.5" height="2.2" fill="#C4BEB0" opacity="0.85"/><rect x="30.9" y="13.7" width="3.6" height="2.9" fill="#AAB6B2" opacity="0.85"/><rect x="61.3" y="12.5" width="2.4" height="2.8" fill="#5E463C" opacity="0.85"/><rect x="44.4" y="12.9" width="2.2" height="2.0" fill="#946450" opacity="0.85"/><rect x="58.5" y="15.5" width="4.0" height="3.0" fill="#AAB6B2" opacity="0.85"/><rect x="10.3" y="14.2" width="2.7" height="2.5" fill="#C4BEB0" opacity="0.85"/><rect x="42.3" y="13.5" width="2.6" height="1.9" fill="#7A5646" opacity="0.85"/><rect x="52.4" y="13.1" width="3.0" height="1.9" fill="#C4BEB0" opacity="0.85"/><rect x="42.7" y="15.4" width="3.9" height="2.2" fill="#946450" opacity="0.85"/><rect x="27.1" y="15.0" width="3.3" height="2.5" fill="#5E463C" opacity="0.85"/><rect x="38.5" y="12.9" width="2.1" height="2.7" fill="#946450" opacity="0.85"/><rect x="58.0" y="15.3" width="2.1" height="2.4" fill="#7A5646" opacity="0.85"/><rect x="24.7" y="14.3" width="2.5" height="1.5" fill="#AAB6B2" opacity="0.85"/><rect x="33.8" y="12.9" width="2.4" height="2.1" fill="#5E463C" opacity="0.85"/><rect x="0.2" y="13.2" width="3.6" height="2.7" fill="#B8886A" opacity="0.85"/><rect x="29" y="11" width="10" height="6" fill="#A9B8B6" opacity="0.8"/><rect x="10" y="12" width="2" height="6" fill="#C9C4B6"/><rect x="44" y="12" width="2" height="6" fill="#C9C4B6"/><rect x="65" y="0.5" width="12" height="10.5" fill="#955A48"/><rect x="70.3" y="0.9" width="2" height="2" fill="#A86B4C" opacity="0.8"/><rect x="69.2" y="8.0" width="2" height="2" fill="#A86B4C" opacity="0.8"/><rect x="67.3" y="7.3" width="2" height="2" fill="#7A5A58" opacity="0.8"/><rect x="74.3" y="8.0" width="2" height="2" fill="#6B4236" opacity="0.8"/><rect x="71.6" y="1.1" width="2" height="2" fill="#B5805A" opacity="0.8"/><rect x="74.0" y="6.8" width="2" height="2" fill="#93503C" opacity="0.8"/><rect x="66.9" y="1.0" width="2" height="2" fill="#7A5A58" opacity="0.8"/><rect x="71.1" y="5.8" width="2" height="2" fill="#B5805A" opacity="0.8"/><rect x="71.8" y="6.2" width="2" height="2" fill="#A86B4C" opacity="0.8"/><rect x="67.7" y="3.5" width="2" height="2" fill="#5E4A46" opacity="0.8"/><rect x="71.4" y="0.6" width="2" height="2" fill="#6B4236" opacity="0.8"/><rect x="71.7" y="2.1" width="2" height="2" fill="#6B4236" opacity="0.8"/><rect x="71.8" y="2.1" width="2" height="2" fill="#5E4A46" opacity="0.8"/><rect x="68.5" y="1.9" width="2" height="2" fill="#7A5A58" opacity="0.8"/><rect x="79" y="0.5" width="9" height="10.5" fill="#B57C52"/><rect x="82.5" y="6.3" width="2" height="2" fill="#93503C" opacity="0.8"/><rect x="81.8" y="0.8" width="2" height="2" fill="#A86B4C" opacity="0.8"/><rect x="85.5" y="5.1" width="2" height="2" fill="#B5805A" opacity="0.8"/><rect x="80.4" y="2.1" width="2" height="2" fill="#7A5A58" opacity="0.8"/><rect x="82.0" y="3.3" width="2" height="2" fill="#A86B4C" opacity="0.8"/><rect x="80.5" y="0.8" width="2" height="2" fill="#5E4A46" opacity="0.8"/><rect x="83.2" y="5.9" width="2" height="2" fill="#93503C" opacity="0.8"/><rect x="80.2" y="6.5" width="2" height="2" fill="#B5805A" opacity="0.8"/><rect x="82.3" y="7.8" width="2" height="2" fill="#B5805A" opacity="0.8"/><rect x="84.6" y="8.2" width="2" height="2" fill="#93503C" opacity="0.8"/><rect x="89" y="0.5" width="18" height="10.5" fill="#8A6A60"/><rect x="89.9" y="6.3" width="2" height="2" fill="#93503C" opacity="0.8"/><rect x="103.4" y="5.0" width="2" height="2" fill="#6B4236" opacity="0.8"/><rect x="104.5" y="3.8" width="2" height="2" fill="#B5805A" opacity="0.8"/><rect x="104.0" y="7.2" width="2" height="2" fill="#6B4236" opacity="0.8"/><rect x="103.6" y="2.0" width="2" height="2" fill="#5E4A46" opacity="0.8"/><rect x="98.7" y="6.9" width="2" height="2" fill="#93503C" opacity="0.8"/><rect x="101.0" y="2.0" width="2" height="2" fill="#7A5A58" opacity="0.8"/><rect x="97.0" y="4.0" width="2" height="2" fill="#A86B4C" opacity="0.8"/><rect x="105.0" y="5.2" width="2" height="2" fill="#B5805A" opacity="0.8"/><rect x="100.8" y="8.0" width="2" height="2" fill="#5E4A46" opacity="0.8"/><rect x="103.6" y="2.5" width="2" height="2" fill="#7A5A58" opacity="0.8"/><rect x="91.9" y="5.1" width="2" height="2" fill="#5E4A46" opacity="0.8"/><rect x="98.2" y="9.0" width="2" height="2" fill="#B5805A" opacity="0.8"/><rect x="104.3" y="6.9" width="2" height="2" fill="#93503C" opacity="0.8"/><rect x="100.8" y="6.8" width="2" height="2" fill="#A86B4C" opacity="0.8"/><rect x="103.8" y="4.9" width="2" height="2" fill="#7A5A58" opacity="0.8"/><rect x="93.7" y="1.9" width="2" height="2" fill="#93503C" opacity="0.8"/><rect x="95.8" y="5.9" width="2" height="2" fill="#B5805A" opacity="0.8"/><rect x="101.0" y="6.0" width="2" height="2" fill="#5E4A46" opacity="0.8"/><rect x="92.0" y="7.5" width="2" height="2" fill="#A86B4C" opacity="0.8"/><rect x="96.8" y="2.8" width="2" height="2" fill="#7A5A58" opacity="0.8"/><rect x="109" y="0.5" width="6" height="10.5" fill="#A6684F"/><rect x="112.4" y="2.2" width="2" height="2" fill="#5E4A46" opacity="0.8"/><rect x="111.3" y="7.3" width="2" height="2" fill="#93503C" opacity="0.8"/><rect x="109.6" y="2.4" width="2" height="2" fill="#A86B4C" opacity="0.8"/><rect x="110.5" y="3.8" width="2" height="2" fill="#6B4236" opacity="0.8"/><rect x="112.1" y="7.9" width="2" height="2" fill="#5E4A46" opacity="0.8"/><rect x="111.3" y="9.0" width="2" height="2" fill="#A86B4C" opacity="0.8"/><rect x="110.9" y="7.9" width="2" height="2" fill="#7A5A58" opacity="0.8"/><rect x="116" y="0.5" width="11" height="10.5" fill="#935E4C"/><rect x="123.3" y="4.6" width="2" height="2" fill="#6B4236" opacity="0.8"/><rect x="116.2" y="8.3" width="2" height="2" fill="#A86B4C" opacity="0.8"/><rect x="120.5" y="4.4" width="2" height="2" fill="#B5805A" opacity="0.8"/><rect x="121.1" y="4.3" width="2" height="2" fill="#93503C" opacity="0.8"/><rect x="122.2" y="7.9" width="2" height="2" fill="#6B4236" opacity="0.8"/><rect x="119.4" y="2.6" width="2" height="2" fill="#B5805A" opacity="0.8"/><rect x="123.1" y="8.4" width="2" height="2" fill="#A86B4C" opacity="0.8"/><rect x="121.4" y="3.3" width="2" height="2" fill="#6B4236" opacity="0.8"/><rect x="122.7" y="2.6" width="2" height="2" fill="#A86B4C" opacity="0.8"/><rect x="117.3" y="7.6" width="2" height="2" fill="#5E4A46" opacity="0.8"/><rect x="116.9" y="5.7" width="2" height="2" fill="#93503C" opacity="0.8"/><rect x="118.0" y="2.3" width="2" height="2" fill="#B5805A" opacity="0.8"/><rect x="122.9" y="4.7" width="2" height="2" fill="#6B4236" opacity="0.8"/><rect x="65" y="12.5" width="62" height="5.5" fill="#8A6656"/><rect x="106.6" y="13.8" width="3.0" height="1.5" fill="#C4BEB0" opacity="0.85"/><rect x="116.3" y="13.6" width="3.4" height="2.1" fill="#5E463C" opacity="0.85"/><rect x="71.6" y="16.0" width="3.0" height="3.0" fill="#C4BEB0" opacity="0.85"/><rect x="78.4" y="15.3" width="3.0" height="2.9" fill="#AAB6B2" opacity="0.85"/><rect x="87.2" y="15.0" width="3.9" height="1.7" fill="#C4BEB0" opacity="0.85"/><rect x="88.9" y="14.3" width="2.9" height="2.3" fill="#C4BEB0" opacity="0.85"/><rect x="77.9" y="15.7" width="3.7" height="2.8" fill="#7A5646" opacity="0.85"/><rect x="116.3" y="15.6" width="3.5" height="2.0" fill="#B8886A" opacity="0.85"/><rect x="73.6" y="12.6" width="2.7" height="2.0" fill="#5E463C" opacity="0.85"/><rect x="77.4" y="12.7" width="2.4" height="1.5" fill="#946450" opacity="0.85"/><rect x="73.8" y="13.1" width="2.2" height="2.3" fill="#B8886A" opacity="0.85"/><rect x="71.2" y="14.1" width="2.4" height="2.5" fill="#7A5646" opacity="0.85"/><rect x="97.4" y="12.8" width="2.4" height="2.4" fill="#946450" opacity="0.85"/><rect x="79.2" y="14.2" width="3.4" height="2.7" fill="#B8886A" opacity="0.85"/><rect x="88.8" y="16.3" width="2.7" height="2.7" fill="#C4BEB0" opacity="0.85"/><rect x="66.1" y="14.5" width="3.5" height="2.4" fill="#AAB6B2" opacity="0.85"/><rect x="75.3" y="16.2" width="3.6" height="1.9" fill="#7A5646" opacity="0.85"/><rect x="93.2" y="13.5" width="2.6" height="2.1" fill="#946450" opacity="0.85"/><rect x="94.4" y="13.6" width="2.1" height="1.9" fill="#5E463C" opacity="0.85"/><rect x="69.6" y="13.8" width="3.5" height="1.7" fill="#946450" opacity="0.85"/><rect x="83.1" y="12.9" width="3.4" height="2.9" fill="#C4BEB0" opacity="0.85"/><rect x="67.0" y="15.5" width="3.0" height="1.7" fill="#AAB6B2" opacity="0.85"/><rect x="124.3" y="13.4" width="3.5" height="1.6" fill="#5E463C" opacity="0.85"/><rect x="102.8" y="14.9" width="2.4" height="2.9" fill="#AAB6B2" opacity="0.85"/><rect x="90.4" y="13.3" width="2.4" height="1.7" fill="#7A5646" opacity="0.85"/><rect x="123.7" y="12.6" width="3.7" height="2.9" fill="#946450" opacity="0.85"/><rect x="79.4" y="13.9" width="2.4" height="2.6" fill="#AAB6B2" opacity="0.85"/><rect x="119.7" y="13.2" width="3.0" height="2.0" fill="#5E463C" opacity="0.85"/><rect x="93" y="11" width="10" height="6" fill="#A9B8B6" opacity="0.8"/><rect x="74" y="12" width="2" height="6" fill="#C9C4B6"/><rect x="108" y="12" width="2" height="6" fill="#C9C4B6"/></g></svg></div></div>
<div class="row" style="top:367px"><span class="c c1">Decorazione parete livello 2</span><span class="c c2">Intonaco</span><span class="c c3">Definito dall'utente</span><div class="pv" style="background:#000"><span class="pvt" style="color:#fff;letter-spacing:0.07px">RGB: 0,0,0</span></div></div>
<div class="row" style="top:386px"><span class="c c1">Decorazione parete livello 3</span><span class="c c2">Ceramica/Lucido/Tipo-03</span><span class="c c3">Predefinito</span><div class="pv" style="background:#fff"><span class="pvt" style="color:#161616;letter-spacing:0.37px">RGB: 255,255,255</span></div></div>
<div class="row last" style="top:405px"><span class="c c1">Decorazione parete livello 4</span><span class="c c2">Ceramica/Lucido/Tipo-03</span><span class="c c3">Predefinito</span><div class="pv" style="background:#fff"><span class="pvt" style="color:#161616;letter-spacing:0.37px">RGB: 255,255,255</span></div></div>
    <div style="position:absolute;left:503px;top:1px;width:1px;height:423px;background:#fff"></div>
    <div style="position:absolute;left:511px;top:18px;width:2px;height:235px;background:#808080"></div>
    <div style="position:absolute;left:18px;top:431px;width:455px;height:2px;background:#808080"></div>
  </div>

  <!-- right panel -->
  <div class="grp" style="left:548px;top:43px;width:254px;height:466px"></div>
  <span class="t b" style="left:551px;top:46px">Materiale</span>
  <svg style="position:absolute;left:558px;top:77px" width="63" height="68"><defs><filter id="pl" x="0" y="0" width="1" height="1"><feTurbulence type="fractalNoise" baseFrequency="0.9" numOctaves="2" seed="4"/><feColorMatrix type="matrix" values="0 0 0 0 0.5  0 0 0 0 0.5  0 0 0 0 0.5  0 0 0 -2.2 1.25"/></filter><linearGradient id="plg" x1="0" y1="0" x2="0" y2="1"><stop offset="0" stop-color="#F8F8F8"/><stop offset="1" stop-color="#EBEBEB"/></linearGradient></defs><rect width="63" height="68" fill="url(#plg)"/><rect width="63" height="68" filter="url(#pl)" opacity="0.16"/></svg>
  <span class="t" style="left:642px;top:75px">ID:</span>
  <div class="inp" style="left:717px;top:70px;width:72px;height:21px"></div>
  <span class="t" style="left:720px;top:74.5px;width:59px;text-align:right;font-family:'Liberation Mono',monospace;font-size:11.6px;transform:scaleY(1.18);transform-origin:50% 50%">1747</span>
  <div class="inp" style="left:642px;top:96px;width:146px;height:20px;background:#F0F0F0"></div>
  <span class="t" style="left:651px;top:100px;color:#6F6F6F">Rendering</span>
  <div class="btn" style="left:643px;top:123px;width:145px;height:24px;line-height:21.5px;font-size:11.1px">Seleziona materiale...</div>
  <div style="position:absolute;left:632.5px;top:114px;width:167px;height:39px;border:4.2px solid #A23AF2;border-radius:20px"></div>
  <div class="btn" style="left:559px;top:153px;width:230px;height:24px;line-height:22px">Selezionare materiale dal catalogo...</div>

  <div class="grp" style="left:558px;top:222px;width:231px;height:65px"></div>
  <span class="t b" style="left:561px;top:226px;font-size:10.9px">Sostituisci colore</span>
  <div style="position:absolute;left:564px;top:246px;width:107px;height:29px;background:#A9CAC1;border-top:1px solid #8a8a8a;border-left:1px solid #8a8a8a"></div>
  <span class="t" style="left:572px;top:257.5px;letter-spacing:0.2px">RALds: 190 80 10</span>
  <div class="btn" style="left:682px;top:247px;width:92px;height:29px;line-height:24.5px;border-radius:15px;font-size:11.1px">Seleziona...</div>

  <div class="grp" style="left:558px;top:295px;width:231px;height:92px"></div>
  <span class="t b" style="left:561px;top:297.5px">Sostituisci dimensione/rotazione</span>
  <span class="t" style="left:564px;top:318px">Larghezza:</span>
  <span class="t" style="left:564px;top:341px">Altezza:</span>
  <span class="t" style="left:564px;top:365.5px">Rotazione:</span>
  <div class="inp" style="left:662px;top:313px;width:48px;height:21px"></div>
  <div class="inp" style="left:662px;top:336px;width:48px;height:21px"></div>
  <div class="inp" style="left:662px;top:360px;width:48px;height:21px"></div>
  <span class="t" style="left:671px;top:317px">0</span>
  <span class="t" style="left:671px;top:340px">0</span>
  <span class="t" style="left:671px;top:365px">0</span>
  <div class="chk" style="left:715px;top:317px"><svg width="12" height="12" style="position:absolute;left:0;top:0"><path d="M2.3 6.2L4.8 8.8L9.8 3.3" fill="none" stroke="#fff" stroke-width="1.5"/></svg></div>
  <div class="chk" style="left:715px;top:340px"><svg width="12" height="12" style="position:absolute;left:0;top:0"><path d="M2.3 6.2L4.8 8.8L9.8 3.3" fill="none" stroke="#fff" stroke-width="1.5"/></svg></div>
  <div class="chk" style="left:715px;top:365px"><svg width="12" height="12" style="position:absolute;left:0;top:0"><path d="M2.3 6.2L4.8 8.8L9.8 3.3" fill="none" stroke="#fff" stroke-width="1.5"/></svg></div>
  <span class="t" style="left:730px;top:316px">Predefinito</span>
  <span class="t" style="left:730px;top:339px">Predefinito</span>
  <span class="t" style="left:730px;top:364px">Predefinito</span>

  <span class="t" style="left:558px;top:395.5px">Proprietà piastrella</span>
  <span class="t" style="left:564px;top:421px">Fuga</span>
  <span class="t" style="left:564px;top:443px">Colore fuga</span>
  <div class="inp" style="left:662px;top:416px;width:48px;height:21px;background:#EFEFEF"></div>
  <span class="t" style="left:672px;top:421px;color:#555">#</span>
  <div style="position:absolute;left:662px;top:439px;width:47px;height:20px;background:#B8B8B8"></div>
  <div class="chke" style="left:716px;top:421px"></div>
  <div class="chke" style="left:716px;top:443px"></div>
  <span class="t" style="left:729px;top:420px;color:#9a9a9a">Predefinito</span>
  <span class="t" style="left:729px;top:442px;color:#9a9a9a">Predefinito</span>
  <div class="btn" style="left:568px;top:470px;width:217px;height:24px;line-height:22px;font-size:11.3px">Impostazioni standard per fughe...</div>

  <!-- bottom buttons -->
  <div class="btn" style="left:22px;top:568px;width:302px;height:24px;line-height:20.5px;font-size:11.4px">Predefinito</div>
  <div class="btn" style="left:361px;top:568px;width:74px;height:24px;line-height:20.5px;font-size:11.2px"><u>C</u>opia</div>
  <div class="btn" style="left:444px;top:568px;width:74px;height:24px;line-height:20.5px;font-size:11.2px"><u>I</u>ncolla</div>
  <div class="btn" style="left:531px;top:568px;width:74px;height:24px;line-height:20.5px;background:#1F6BF5;border-color:#1F6BF5;color:#fff">OK</div>
  <div class="btn" style="left:613px;top:568px;width:74px;height:24px;line-height:20.5px;font-size:11.4px">Annulla</div>
  <div class="btn" style="left:696px;top:568px;width:74px;height:24px;line-height:20.5px;font-size:11.2px"><u>G</u>uida</div>
</div>

</body></html>
